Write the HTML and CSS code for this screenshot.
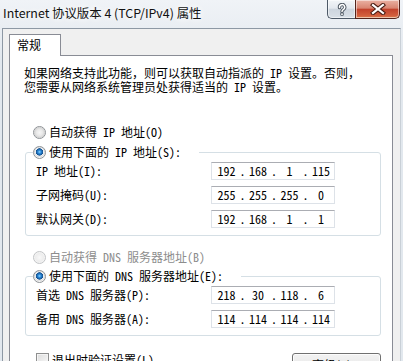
FILE: index.html
```html
<!DOCTYPE html>
<html lang="zh-CN">
  <head>
    <meta charset="UTF-8" />
    <meta name="viewport" content="width=device-width, initial-scale=1.0" />
    <title>Internet 协议版本 4 (TCP/IPv4) 属性</title>
    <link rel="stylesheet" href="styles.css">
  </head>
  <body>
    <div class="window">
      <div class="titlebar">
        <span class="title">Internet 协议版本 4 (TCP/IPv4) 属性</span>
        <div class="caption-buttons">
          <span class="cap-btn help">
            <svg width="10" height="13" viewBox="0 0 10 13">
              <path d="M2.5 4.5 A2.6 2.6 0 1 1 6.5 6.4 Q5 7.2 5 8.6" fill="none" stroke="#4b5560" stroke-width="3.4" stroke-linecap="round"/>
              <rect x="3.3" y="9.6" width="3.4" height="3.2" rx="0.8" fill="#4b5560"/>
              <path d="M2.5 4.5 A2.6 2.6 0 1 1 6.5 6.4 Q5 7.2 5 8.6" fill="none" stroke="#fff" stroke-width="1.5" stroke-linecap="round"/>
              <rect x="4.2" y="10.4" width="1.6" height="1.6" fill="#fff"/>
            </svg>
          </span>
          <span class="cap-btn close">
            <svg width="16" height="12" viewBox="0 0 16 12">
              <path d="M3 2 L13 10 M13 2 L3 10" stroke="#4a1c12" stroke-width="4.2" stroke-linecap="square"/>
              <path d="M3 2 L13 10 M13 2 L3 10" stroke="#fff" stroke-width="2.2" stroke-linecap="square"/>
            </svg>
          </span>
        </div>
      </div>
      <div class="client">
        <div class="tabs"><span class="tab">常规</span></div>
        <div class="panel">
          <p class="intro"><span class="line">如果网络支持此功能，则可以获取自动指派的 IP 设置。否则，</span><span class="line">您需要从网络系统管理员处获得适当的 IP 设置。</span></p>

          <div class="option first"><span class="radio"></span>自动获得 IP 地址(O)</div>
          <fieldset class="group">
            <legend class="option legend"><span class="radio checked"></span>使用下面的 IP 地址(S):</legend>
            <div class="field">
              <span class="label">IP 地址(I):</span>
              <span class="ip"><span class="oct">192</span><span class="dot">.</span><span class="oct">168</span><span class="dot">.</span><span class="oct">1</span><span class="dot">.</span><span class="oct">115</span></span>
            </div>
            <div class="field">
              <span class="label">子网掩码(U):</span>
              <span class="ip"><span class="oct">255</span><span class="dot">.</span><span class="oct">255</span><span class="dot">.</span><span class="oct">255</span><span class="dot">.</span><span class="oct">0</span></span>
            </div>
            <div class="field">
              <span class="label">默认网关(D):</span>
              <span class="ip"><span class="oct">192</span><span class="dot">.</span><span class="oct">168</span><span class="dot">.</span><span class="oct">1</span><span class="dot">.</span><span class="oct">1</span></span>
            </div>
          </fieldset>

          <div class="option disabled dns-auto"><span class="radio"></span>自动获得 DNS 服务器地址(B)</div>
          <fieldset class="group dns">
            <legend class="option legend"><span class="radio checked"></span>使用下面的 DNS 服务器地址(E):</legend>
            <div class="field">
              <span class="label">首选 DNS 服务器(P):</span>
              <span class="ip"><span class="oct">218</span><span class="dot">.</span><span class="oct">30</span><span class="dot">.</span><span class="oct">118</span><span class="dot">.</span><span class="oct">6</span></span>
            </div>
            <div class="field">
              <span class="label">备用 DNS 服务器(A):</span>
              <span class="ip"><span class="oct">114</span><span class="dot">.</span><span class="oct">114</span><span class="dot">.</span><span class="oct">114</span><span class="dot">.</span><span class="oct">114</span></span>
            </div>
          </fieldset>

          <div class="footer">
            <div class="check"><span class="checkbox"></span>退出时验证设置(L)</div>
            <button class="btn">高级(V)...</button>
          </div>
        </div>
      </div>
    </div>
  </body>
</html>
```

FILE: styles.css
```css
body {
  margin: 0;
  overflow: hidden;
  font-family: "Noto Sans Mono CJK SC", "Noto Sans CJK SC", sans-serif;
  font-size: 12px;
  color: #000;
  background: #e4eaf0;
}
.window {
  width: 403px;
  height: 361px;
  overflow: hidden;
  background: linear-gradient(#f0f3f7, #e2e8ee 60px);
}
.titlebar {
  height: 28px;
  display: flex;
  justify-content: space-between;
  align-items: flex-start;
}
.title {
  font-family: "Noto Sans CJK SC", sans-serif;
  font-size: 12.4px;
  line-height: 16px;
  padding: 5px 0 0 3px;
  color: #111;
  text-shadow: 0 0 6px #fff, 0 0 10px #fff;
}
.caption-buttons {
  display: flex;
  margin-right: 3px;
}
.cap-btn {
  height: 19px;
  box-sizing: border-box;
  display: flex;
  align-items: center;
  justify-content: center;
  border: 1px solid #4d5967;
  border-top: none;
  box-shadow: inset 0 0 0 1px rgba(255, 255, 255, 0.5);
}
.help {
  width: 28px;
  border-right: none;
  border-radius: 0 0 0 5px;
  background: linear-gradient(#f2f5f8, #e3e8ee 45%, #cdd5de 52%, #d9e0e7);
}
.close {
  width: 45px;
  border-color: #53241c;
  border-radius: 0 0 5px 0;
  background: linear-gradient(#eab1a3, #d98571 45%, #c2422c 52%, #d4623f 90%, #e0925a);
}
.client {
  margin: 0 2px 0 2px;
  height: 333px;
  border-top: 1px solid #8d98a4;
  border-left: 1px solid #8d98a4;
  border-right: 1px solid #c9d0d7;
  background: #f0f0f0;
}
.tabs {
  padding: 5px 0 0 6px;
  height: 21px;
}
.tab {
  position: relative;
  z-index: 1;
  display: inline-block;
  box-sizing: border-box;
  width: 52px;
  height: 22px;
  padding-left: 7px;
  border: 1px solid #898c95;
  border-bottom: none;
  background: #fff;
  font-family: "Noto Sans CJK SC", sans-serif;
  font-size: 12px;
  line-height: 20px;
}
.panel {
  margin-left: 6px;
  width: 384px;
  height: 320px;
  box-sizing: border-box;
  padding: 0 11px 0 14px;
  border: 1px solid #898c95;
  background: #fff;
}
.intro {
  margin: 10px 0 0;
  white-space: nowrap;
}
.intro .line {
  display: block;
  height: 14px;
  line-height: 14px;
}
.option {
  display: flex;
  align-items: center;
  gap: 3px;
  height: 16px;
  line-height: 16px;
  margin-left: 9px;
  white-space: nowrap;
}
.option.first {
  margin-top: 30px;
}
.option.disabled {
  color: #8d8d8d;
}
.dns-auto {
  margin-top: 13px;
}
.radio {
  flex: none;
  width: 13px;
  height: 13px;
  box-sizing: border-box;
  border-radius: 50%;
  border: 1px solid #8e9296;
  background: radial-gradient(circle, #f6f6f6 0, #e9e9e9 3px, #d6d6d6 5px, #f4f4f4 5.5px);
}
.radio.checked {
  background: radial-gradient(circle at 50% 45%, #8fd6ff 0, #2a88d8 1.6px, #15518f 3.4px, #eef1f4 3.9px, #dcdcdc 5px, #f4f4f4 5.5px);
}
.disabled .radio {
  border-color: #c2c4c6;
  background: radial-gradient(circle, #f8f8f8 0, #ededed 4px, #f6f6f6 5.5px);
}
.group {
  margin: 4px 0 0 1px;
  padding: 2px 0 7px 7px;
  min-width: 0;
  border: 1px solid #d5dfe5;
  border-radius: 3px;
}
.group.dns {
  margin-top: 3px;
}
.legend {
  margin-left: 0;
  padding: 0 18px 0 0;
}
.field {
  display: flex;
  align-items: center;
  height: 18px;
  margin-left: 3px;
}
.field + .field {
  margin-top: 6px;
}
.label {
  width: 175px;
  line-height: 16px;
  white-space: nowrap;
}
.ip {
  display: flex;
  width: 124px;
  height: 18px;
  box-sizing: border-box;
  padding-left: 2px;
  border: 1px solid #dde2e8;
  border-top-color: #abadb3;
  line-height: 16px;
}
.oct {
  width: 25px;
  text-align: center;
}
.dot {
  width: 6.5px;
  text-align: right;
}
.footer {
  display: flex;
  justify-content: space-between;
  align-items: flex-start;
  margin-top: 17px;
}
.check {
  display: flex;
  align-items: flex-start;
  gap: 3px;
  margin-left: 12px;
  line-height: 13px;
  white-space: nowrap;
}
.checkbox {
  flex: none;
  width: 13px;
  height: 13px;
  box-sizing: border-box;
  border: 1px solid #8e8f8f;
  background: linear-gradient(135deg, #dcdcdc, #fafafa);
  box-shadow: inset 0 0 0 1px #f4f4f4;
}
.btn {
  width: 89px;
  height: 23px;
  padding: 0;
  border: 1px solid #707070;
  border-radius: 3px;
  background: linear-gradient(#f2f2f2, #ebebeb 50%, #dddddd 50%, #cfcfcf);
  box-shadow: inset 0 0 0 1px #fcfcfc;
  font-family: "Noto Sans CJK SC", sans-serif;
  font-size: 12px;
  color: #000;
}
```
